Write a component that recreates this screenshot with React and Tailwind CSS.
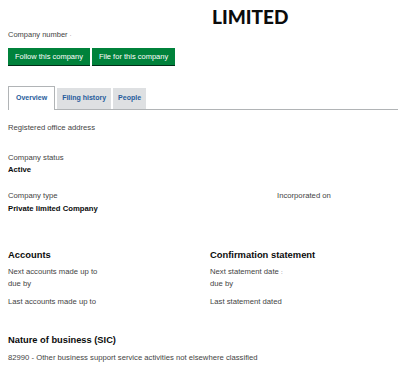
export default function App() {
  return (
    <div className="w-[400px] h-[369px] bg-white overflow-hidden text-[#0b0c0c]" style={{ fontFamily: '"Liberation Sans", Arial, sans-serif' }}>
      <div className="pl-[212px] pt-[6px] h-[28px] text-[19px] leading-[22px] font-bold" style={{ fontFamily: 'Lato, "Liberation Sans", sans-serif', fontWeight: 900 }}>
        LIMITED
      </div>
      <div className="pl-2 mt-[2px] text-[7.5px] leading-[10px] text-[#444]">
        Company number <span className="text-[5px] align-top">·</span>
      </div>
      <div className="flex gap-[2px] pl-2 mt-[8px]">
        <div className="bg-[#00823b] text-white text-[7.5px] h-[17px] px-[7px] flex items-center shadow-[0_1px_0_#002d18]">Follow this company</div>
        <div className="bg-[#00823b] text-white text-[7.5px] h-[17px] px-[7px] flex items-center shadow-[0_1px_0_#002d18]">File for this company</div>
      </div>
      <div className="flex items-end pl-2 pr-[2px] mt-[21px]">
        <div className="h-[24px] px-[7px] flex items-center border border-b-0 border-[#b1b4b6] bg-white text-[#275c9c] font-bold text-[7px]">Overview</div>
        <div className="flex-1 flex items-end border-b border-[#b1b4b6] h-[24px]">
          <div className="ml-[2px] h-[21px] px-[5px] flex items-center bg-[#dee0e2] text-[#275c9c] font-bold text-[7px]">Filing history</div>
          <div className="ml-[2px] h-[21px] px-[5px] flex items-center bg-[#dee0e2] text-[#275c9c] font-bold text-[7px]">People</div>
        </div>
      </div>
      <div className="pl-2 text-[7.7px] leading-[10px] text-[#444]">
        <div className="mt-[13px]">Registered office address</div>
        <div className="mt-[20px]">Company status</div>
        <div className="mt-[2px] font-bold text-[#0b0c0c]">Active</div>
        <div className="flex mt-[16px]">
          <div className="w-[269px]">
            <div>Company type</div>
            <div className="mt-[3px] font-bold text-[#0b0c0c]">Private limited Company</div>
          </div>
          <div>Incorporated on</div>
        </div>
        <div className="flex mt-[34px]">
          <div className="w-[202px]">
            <div className="text-[9.4px] leading-[13px] font-bold text-[#0b0c0c]">Accounts</div>
            <div className="mt-[6px]">Next accounts made up to</div>
            <div className="mt-[2px]">due by</div>
            <div className="mt-[8px]">Last accounts made up to</div>
          </div>
          <div>
            <div className="text-[9.4px] leading-[13px] font-bold text-[#0b0c0c]">Confirmation statement</div>
            <div className="mt-[6px]">Next statement date <span className="text-[6px]">:</span></div>
            <div className="mt-[2px]">due by</div>
            <div className="mt-[8px]">Last statement dated</div>
          </div>
        </div>
        <div className="mt-[27px] text-[9.3px] leading-[13px] font-bold text-[#0b0c0c]">Nature of business (SIC)</div>
        <div className="mt-[6px]">82990 - Other business support service activities not elsewhere classified</div>
      </div>
    </div>
  );
}
